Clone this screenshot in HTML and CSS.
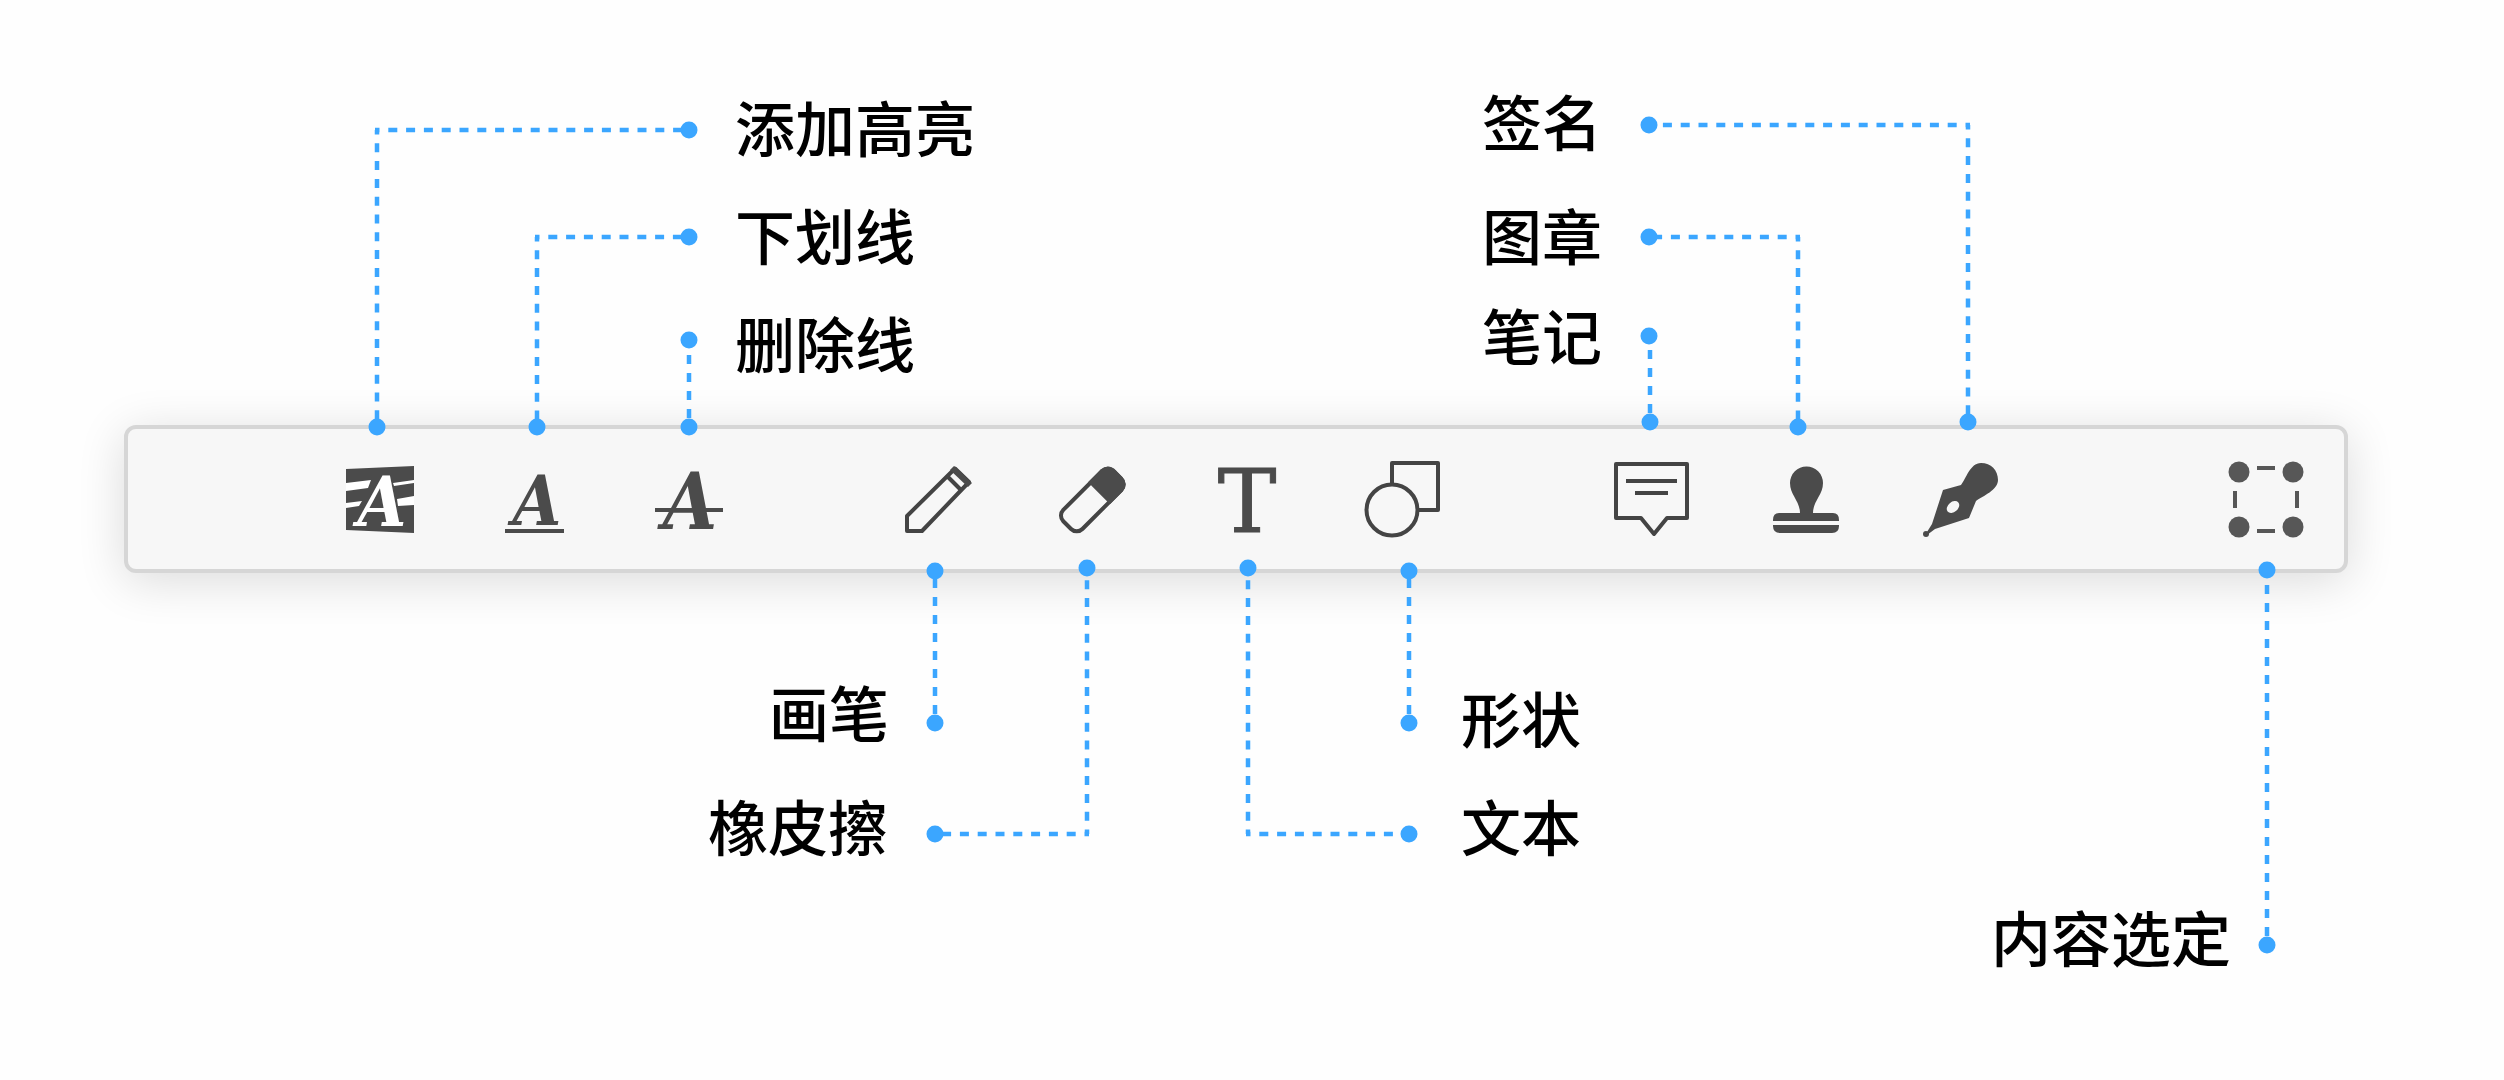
FILE: index.html
```html
<!DOCTYPE html>
<html lang="zh-CN">
<head>
    <meta charset="UTF-8">
    <meta name="viewport" content="width=device-width, initial-scale=1.0">
    <title>注释工具栏</title>
    <link rel="stylesheet" href="styles.css">
</head>
<body>

    <main class="guide">
        <div class="toolbar" role="toolbar">

            <!-- Text markup -->
            <div class="tool-group">
                <button class="tool" type="button">
                    <svg class="icon" viewBox="0 0 80 80">
                        <path d="M6 10L74 7V74L6 71Z"/>
                        <path class="paper" d="M6 24L31 21L28 29L6 32ZM53 24L74 21V24L54 27ZM6 44L22 42L19 47L6 49ZM57 40L74 37V46L58 47Z"/>
                        <text class="letter letter-small paper" x="42" y="67">A</text>
                    </svg>
                    <svg class="wire" viewBox="0 0 80 80">
                        <path d="M35 -329H349M37 -329V-32"/>
                        <circle cx="349" cy="-329" r="8.5"/>
                        <circle cx="37" cy="-32" r="8.5"/>
                    </svg>
                    <span class="label label-highlight">添加高亮</span>
                </button>
                <button class="tool" type="button">
                    <svg class="icon" viewBox="0 0 80 80">
                        <text class="letter letter-small" x="42" y="66">A</text>
                        <path d="M10 70H69V74H10Z"/>
                    </svg>
                    <svg class="wire" viewBox="0 0 80 80">
                        <path d="M40 -222H194M42 -222V-32"/>
                        <circle cx="194" cy="-222" r="8.5"/>
                        <circle cx="42" cy="-32" r="8.5"/>
                    </svg>
                    <span class="label label-underline">下划线</span>
                </button>
                <button class="tool" type="button">
                    <svg class="icon" viewBox="0 0 80 80">
                        <text class="letter" x="40" y="70">A</text>
                        <path d="M5 49H73V53H5Z"/>
                    </svg>
                    <svg class="wire" viewBox="0 0 80 80">
                        <path class="straight" d="M39 -32V-119"/>
                        <circle cx="39" cy="-119" r="8.5"/>
                        <circle cx="39" cy="-32" r="8.5"/>
                    </svg>
                    <span class="label label-strike">删除线</span>
                </button>
            </div>

            <!-- Drawing -->
            <div class="tool-group">
                <button class="tool" type="button">
                    <svg class="icon" viewBox="0 0 80 80">
                        <path class="outline" d="M9 57L57 9.500L71 23L24 72H9Z"/>
                        <path class="outline" d="M50 18L63 31"/>
                        <path d="M56 7L74 24L70 28L52 11Z"/>
                    </svg>
                    <svg class="wire" viewBox="0 0 80 80">
                        <path class="straight" d="M37 264V112"/>
                        <circle cx="37" cy="112" r="8.5"/>
                        <circle cx="37" cy="264" r="8.5"/>
                    </svg>
                    <span class="label label-pencil">画笔</span>
                </button>
                <button class="tool" type="button">
                    <svg class="icon" viewBox="0 0 80 80">
                        <g transform="rotate(-45 40 41)">
                            <rect class="outline" x="4" y="27" width="71" height="27" rx="8"/>
                            <path d="M49 25H67Q77 26 77 36V45Q77 55 67 56H49Z"/>
                        </g>
                    </svg>
                    <svg class="wire" viewBox="0 0 80 80">
                        <path d="M36 375H-118M34 375V109"/>
                        <circle cx="-118" cy="375" r="8.5"/>
                        <circle cx="34" cy="109" r="8.5"/>
                    </svg>
                    <span class="label label-eraser">橡皮擦</span>
                </button>
                <button class="tool" type="button">
                    <svg class="icon" viewBox="0 0 80 80">
                        <text class="letter-text" x="39" y="73">T</text>
                    </svg>
                    <svg class="wire" viewBox="0 0 80 80">
                        <path d="M38 375H201M40 375V109"/>
                        <circle cx="201" cy="375" r="8.5"/>
                        <circle cx="40" cy="109" r="8.5"/>
                    </svg>
                    <span class="label label-text">文本</span>
                </button>
                <button class="tool" type="button">
                    <svg class="icon" viewBox="0 0 80 80">
                        <path class="outline" d="M29 25V4H75V51H55"/>
                        <circle class="outline" cx="29" cy="51" r="25.500"/>
                    </svg>
                    <svg class="wire" viewBox="0 0 80 80">
                        <path class="straight" d="M46 264V112"/>
                        <circle cx="46" cy="112" r="8.5"/>
                        <circle cx="46" cy="264" r="8.5"/>
                    </svg>
                    <span class="label label-shape">形状</span>
                </button>
            </div>

            <!-- Notes and signing -->
            <div class="tool-group">
                <button class="tool" type="button">
                    <svg class="icon" viewBox="0 0 80 80">
                        <path class="outline" d="M5 5H76V59H56L43 75L30 59H5Z"/>
                        <path class="outline" d="M15 22H66M24 34H57"/>
                    </svg>
                    <svg class="wire" viewBox="0 0 80 80">
                        <path class="straight" d="M39 -37V-123"/>
                        <circle cx="38" cy="-123" r="8.5"/>
                        <circle cx="39" cy="-37" r="8.5"/>
                    </svg>
                    <span class="label label-note">笔记</span>
                </button>
                <button class="tool" type="button">
                    <svg class="icon" viewBox="0 0 80 80">
                        <path d="M34 54C34 42 24 36 24 24A16.500 16.500 0 0 1 57 24C57 36 47 42 47 54H67Q73 54 73 61V62H7V61Q7 54 13 54Z"/>
                        <path d="M7 66H73V67Q73 74 66 74H14Q7 74 7 67Z"/>
                    </svg>
                    <svg class="wire" viewBox="0 0 80 80">
                        <path d="M34 -222H-117M32 -222V-32"/>
                        <circle cx="-117" cy="-222" r="8.5"/>
                        <circle cx="32" cy="-32" r="8.5"/>
                    </svg>
                    <span class="label label-stamp">图章</span>
                </button>
                <button class="tool" type="button">
                    <svg class="icon" viewBox="0 0 80 80">
                        <path d="M6 73L11 65L22 31L40 26C45 20 49 4 60 4C70 4 77 11 77 21C77 31 62 37 55 42L48 59L14 70L6 76Z"/>
                        <circle cx="5" cy="75" r="3"/>
                        <ellipse class="hole" cx="32" cy="48" rx="7" ry="5" transform="rotate(-40 32 48)"/>
                    </svg>
                    <svg class="wire" viewBox="0 0 80 80">
                        <path d="M49 -334H-272M47 -334V-37"/>
                        <circle cx="-272" cy="-334" r="8.5"/>
                        <circle cx="47" cy="-37" r="8.5"/>
                    </svg>
                    <span class="label label-sign">签名</span>
                </button>
            </div>

            <!-- Selection -->
            <div class="tool-group tool-group-end">
                <button class="tool" type="button">
                    <svg class="icon icon-select" viewBox="0 0 80 80">
                        <circle cx="13" cy="13" r="10.500"/>
                        <circle cx="67" cy="13" r="10.500"/>
                        <circle cx="13" cy="68" r="10.500"/>
                        <circle cx="67" cy="68" r="10.500"/>
                        <path d="M31 7H49V11H31ZM31 70H49V74H31ZM7 32H11V49H7ZM69 32H73V49H69Z"/>
                    </svg>
                    <svg class="wire" viewBox="0 0 80 80">
                        <path class="straight" d="M41 486V111"/>
                        <circle cx="41" cy="111" r="8.5"/>
                        <circle cx="41" cy="486" r="8.5"/>
                    </svg>
                    <span class="label label-select">内容选定</span>
                </button>
            </div>

        </div>
    </main>

</body>
</html>
```
FILE: styles.css
```css
* {
    margin: 0;
    padding: 0;
    box-sizing: border-box;
}

body {
    background-color: #fefefe;
    font-family: "Noto Sans CJK SC", sans-serif;
    color: #000;
}

.guide {
    min-height: 100vh;
    padding: 425px 156px 0 124px;
}

.toolbar {
    display: flex;
    align-items: center;
    gap: 168px;
    padding: 30px 38px 30px 212px;
    background-color: #f7f7f7;
    border: 4px solid #d6d6d6;
    border-radius: 12px;
    box-shadow: 0 8px 48px rgba(0, 0, 0, 0.14);
}

.tool-group {
    display: flex;
    gap: 75px;
}

.tool-group-end {
    margin-left: auto;
}

/* The button is the anchor for its own wire and label */
.tool {
    position: relative;
    width: 80px;
    height: 80px;
    border: none;
    background: none;
    font: inherit;
    color: inherit;
    cursor: pointer;
}

.icon {
    display: block;
    width: 80px;
    height: 80px;
    overflow: visible;
    fill: #4b4b4b;
}

.icon-select {
    fill: #575757;
}

.outline {
    fill: none;
    stroke: #444;
    stroke-width: 4;
    stroke-linejoin: round;
}

.paper {
    fill: #fff;
}

.hole {
    fill: #f7f7f7;
}

.letter {
    font: italic bold 78px "DejaVu Serif Condensed", "DejaVu Serif", serif;
    text-anchor: middle;
}

.letter-small {
    font-size: 70px;
}

.letter-text {
    font: 88px "DejaVu Serif", serif;
    text-anchor: middle;
    stroke: #4b4b4b;
    stroke-width: 1;
}

.wire {
    position: absolute;
    top: 0;
    left: 0;
    width: 80px;
    height: 80px;
    overflow: visible;
    pointer-events: none;
    fill: #3ba6ff;
}

.wire path {
    fill: none;
    stroke: #3ba6ff;
    stroke-width: 4.5;
    stroke-dasharray: 9 8.8;
    stroke-dashoffset: 4.5;
}

.wire .straight {
    stroke-dasharray: 9 9;
    stroke-dashoffset: 9;
}

.label {
    position: absolute;
    font-size: 60px;
    font-weight: 500;
    line-height: 60px;
    white-space: nowrap;
}

.label-highlight {
    top: -363px;
    left: 395px;
}

.label-underline {
    top: -255px;
    left: 240px;
}

.label-strike {
    top: -147px;
    left: 85px;
}

.label-pencil {
    top: 222px;
    left: -129px;
}

.label-eraser {
    top: 336px;
    left: -345px;
}

.label-text {
    top: 336px;
    left: 253px;
}

.label-shape {
    top: 228px;
    left: 98px;
}

.label-note {
    top: -155px;
    left: -129px;
}

.label-stamp {
    top: -255px;
    left: -284px;
}

.label-sign {
    top: -369px;
    left: -439px;
}

.label-select {
    top: 447px;
    left: -235px;
}
```
